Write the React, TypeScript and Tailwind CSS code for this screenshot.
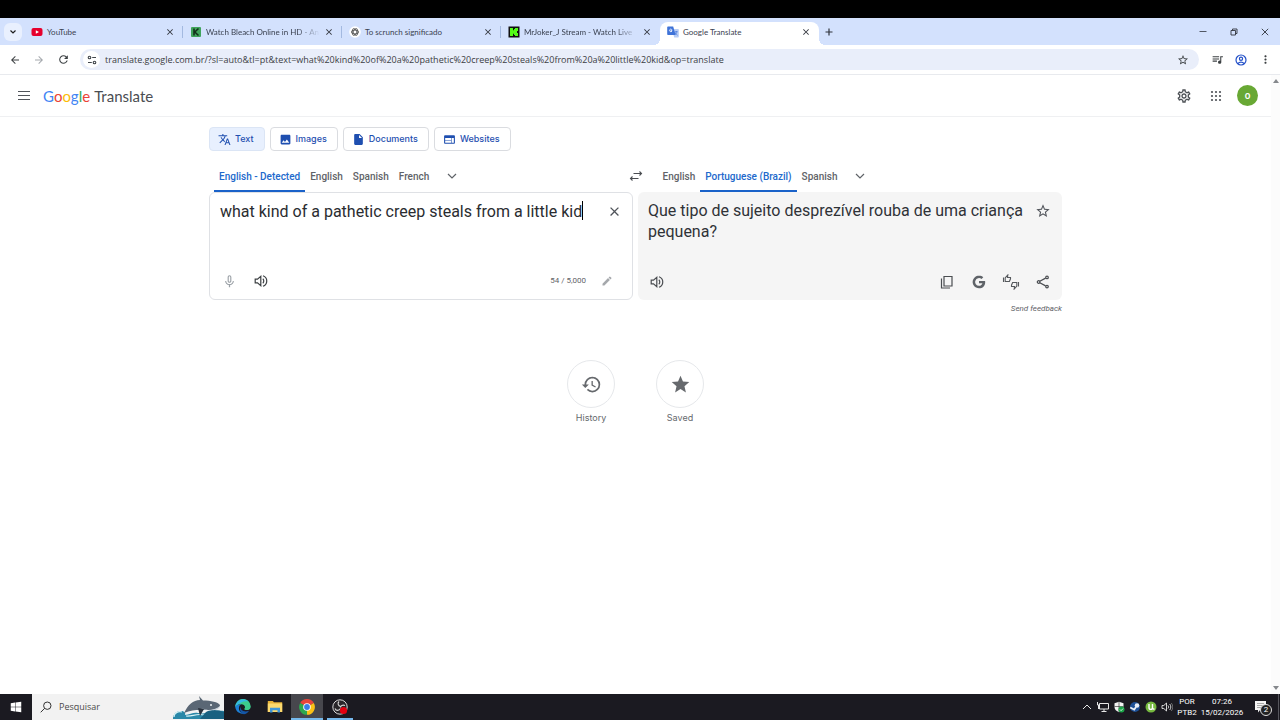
import type { ReactNode } from "react";
import { FaWindows } from "react-icons/fa";
import {
  MdArrowBack,
  MdArrowForward,
  MdClose,
  MdEdit,
  MdHistory,
  MdImage,
  MdInsertDriveFile,
  MdMicNone,
  MdMoreVert,
  MdOutlineSettings,
  MdQueueMusic,
  MdRefresh,
  MdStar,
  MdStarBorder,
  MdTranslate,
  MdWeb,
} from "react-icons/md";

const chromeFont = "font-['Open_Sans','Noto_Sans',sans-serif]";

const sourceText = "what kind of a pathetic creep steals from a little kid";
const url =
  "translate.google.com.br/?sl=auto&tl=pt&text=what%20kind%20of%20a%20pathetic%20creep%20steals%20from%20a%20little%20kid&op=translate";

const YouTubeIcon = () => (
  <svg viewBox="0 0 12 12" className="size-3">
    <rect x="0.5" y="2" width="11" height="8" rx="2" fill="#e6002d" />
    <path d="M4.8 4.2v3.6L8 6z" fill="#fff" />
  </svg>
);

const BleachIcon = () => (
  <svg viewBox="0 0 12 12" className="size-3">
    <rect x="1" y="1" width="10" height="10" rx="1" fill="#3fa35b" />
    <path d="M4 2.5v7M8.5 2.5L4.8 6l3.7 3.5" stroke="#12301c" strokeWidth="1.6" fill="none" />
  </svg>
);

const ChatIcon = () => (
  <svg viewBox="0 0 12 12" className="size-3">
    <circle cx="6" cy="6" r="5.8" fill="#fff" />
    <g fill="none" stroke="#444" strokeWidth="0.7">
      <ellipse cx="6" cy="6" rx="3.8" ry="1.9" />
      <ellipse cx="6" cy="6" rx="3.8" ry="1.9" transform="rotate(60 6 6)" />
      <ellipse cx="6" cy="6" rx="3.8" ry="1.9" transform="rotate(120 6 6)" />
    </g>
  </svg>
);

const KickIcon = () => (
  <svg viewBox="0 0 12 12" className="size-3">
    <rect x="0.5" y="0.5" width="11" height="11" fill="#111" />
    <path d="M2 2h3v2.3h1V3h1V2h3v3H9v2h1v3H7V9H6V7.7H5V10H2z" fill="#53fc18" />
  </svg>
);

const TranslateIcon = () => (
  <svg viewBox="0 0 12 12" className="size-3">
    <path d="M5 3h6a.8.8 0 0 1 .8.8v7a.8.8 0 0 1-.8.8H7.2z" fill="#b8cdf5" />
    <path d="M1 .5h5.2L8.6 9H1a.8.8 0 0 1-.8-.8V1.300A.8.8 0 0 1 1 .5z" fill="#3f73d8" />
    <path d="M5.400 4.200H4v1h.9A1.300 1.300 0 1 1 4.600 3.400" stroke="#fff" strokeWidth="0.8" fill="none" />
    <path d="M7.800 5.800h3M9.300 5v.8c-.1 1.400-.8 2.400-1.500 3M8.500 7c.5 1 1.200 1.600 2 2.200" stroke="#3f73d8" strokeWidth="0.7" fill="none" />
  </svg>
);

const GoogleGIcon = () => (
  <svg viewBox="0 0 24 24" className="size-4">
    <path
      d="M12 10.400v3.500h5.100c-.5 2.300-2.400 3.900-5.100 3.900a5.800 5.800 0 1 1 3.800-10.200l2.600-2.600A9.500 9.500 0 1 0 12 21.500c5.500 0 9.300-3.900 9.300-9.300 0-.6-.1-1.200-.2-1.800z"
      fill="#5f6368"
    />
  </svg>
);

const CopyIcon = () => (
  <svg viewBox="0 0 16 16" className="size-4" fill="none" stroke="#4a4d51" strokeWidth="1.200">
    <path d="M5 2.500h8v9.500H5z" />
    <path d="M2.500 4.500v9.500h8.500" />
  </svg>
);

const SpeakerIcon = () => (
  <svg viewBox="0 0 14 14" className="size-3.5" fill="none" stroke="currentColor" strokeWidth="1.200">
    <path d="M1.200 5.200h2.300L6.800 2.400v9.200L3.500 8.800H1.200z" />
    <path d="M8.800 4.800c1.300 1 1.300 3.400 0 4.400" />
    <path d="M9 1.800c5 1.700 5 8.700 0 10.400" />
  </svg>
);

const ShareIcon = () => (
  <svg viewBox="0 0 14 14" className="size-3.5" fill="none" stroke="currentColor" strokeWidth="1.200">
    <path d="M3.800 6.300l5.800-3.200M3.800 7.700l5.800 3.200" />
    <circle cx="2.600" cy="7" r="1.300" />
    <circle cx="11" cy="2.400" r="1.300" />
    <circle cx="11" cy="11.600" r="1.300" />
  </svg>
);

const RateIcon = () => (
  <svg viewBox="0 0 18 16" className="h-4 w-[18px]" fill="none" stroke="#55585c" strokeWidth="1.100">
    <path d="M1.500 3.500v4.500M3.200 3.800L5.800 1l-.3 2.500h3v1.300L7.400 7.500H3.200z" />
    <path d="M16.500 12.500V8M14.800 12.200L12.200 15l.3-2.500h-3v-1.300l1.100-2.700h4.200z" />
  </svg>
);

const SwapIcon = () => (
  <svg viewBox="0 0 14 12" className="h-3 w-3.5" fill="none" stroke="#4a4d51" strokeWidth="1.100">
    <path d="M4.500 3.500h8M10.500 1.500l2 2-2 2" />
    <path d="M9.500 8.500h-8M3.500 6.500l-2 2 2 2" />
  </svg>
);

const AppsIcon = () => (
  <svg viewBox="0 0 12 12" className="size-3" fill="#4d5156">
    {[2, 6, 10].map((y) => [2, 6, 10].map((x) => <circle key={`${x}-${y}`} cx={x} cy={y} r="1.100" />))}
  </svg>
);

const ChevronIcon = () => (
  <svg viewBox="0 0 10 10" className="size-2.5" fill="none" stroke="#5f6368" strokeWidth="1.200">
    <path d="M1 3l4 4 4-4" />
  </svg>
);

const TuneIcon = () => (
  <svg viewBox="0 0 12 12" className="size-3" fill="none" stroke="#41464b" strokeWidth="1.100">
    <path d="M6.200 3.500H10M2 8.500h3.800" />
    <circle cx="3.500" cy="3.500" r="1.300" />
    <circle cx="8.500" cy="8.500" r="1.300" />
  </svg>
);

const ProfileIcon = () => (
  <svg viewBox="0 0 14 14" className="size-3.5" fill="none" stroke="#2350c8" strokeWidth="1.200">
    <circle cx="7" cy="7" r="5" />
    <circle cx="7" cy="5.800" r="1.600" />
    <path d="M4 10.500c1.500-1.800 4.500-1.800 6 0" />
  </svg>
);

const WhaleIcon = () => (
  <svg viewBox="0 0 52 24" className="h-6 w-[52px]">
    <path d="M1 24c0-5 3-8 8-8 3 0 5 2 4 4 5 0 8-3 13-2 9 2 13-3 26-2v8z" fill="#2a88a8" />
    <path d="M2 22c0-4 4-6 8-5M14 21c6 1 10-3 18-1s12-2 19-2" stroke="#d5f1f5" strokeWidth="1.200" fill="none" />
    <path d="M34 17c6-3 12-2 18 0v7H28z" fill="#1a6180" />
    <path d="M12 18c4-8 9-13 16-13l-1-4 4 4.500c8 0 15 1.500 17 4.500 0 3-5 5-12 5-8 0-15-1-24 3z" fill="#5a6775" />
    <path d="M28 13c6 3 14 3 20-2-1 4-6 5-12 4z" fill="#c9d2da" />
    <path d="M26 13l2 8 4-7z" fill="#2b333e" />
    <circle cx="39" cy="10" r="1" fill="#eef2f4" />
  </svg>
);

const EdgeIcon = () => (
  <svg viewBox="0 0 16 16" className="size-4">
    <path d="M.2 8A7.800 7.800 0 0 1 15.800 7.400c0 2.400-1.900 3.700-4 3.700-1.800 0-2.500-.7-2.500-1.200S10 9.300 10 8.200C10 6.400 8.300 5.200 6.200 5.200 3.400 5.200 1 6.600.2 8z" fill="#3ccb8c" />
    <path d="M.2 8C.7 3 4.500.2 8 .2c2.500 0 4.500.9 5.800 2.400C10.500 1.400 4 3 .2 8z" fill="#35b8e6" />
    <path d="M.2 8c1-2 3.400-2.900 6-2.800-1.500.7-2.300 2.200-2.300 4 0 3.600 3.300 6 7.400 4.900A7.900 7.900 0 0 1 .2 8z" fill="#1c7fd6" />
    <path d="M5.800 7.600c-.8 3.400 2.800 6 8.300 4.200-1 1.500-2.300 2.600-4 3.300C6 15.800 3.700 11 5.800 7.600z" fill="#1456a8" />
  </svg>
);

const FolderIcon = () => (
  <svg viewBox="0 0 16 16" className="size-4">
    <path d="M.8 2h5l1.200 1.300h8.200V13H.8z" fill="#e8b339" />
    <path d="M.8 4.500h14.400V13H.8z" fill="#fbd96f" />
    <path d="M3 13.500V8.800h10v4.700h-2.500v-2.300h-5v2.300z" fill="#3f97d9" />
  </svg>
);

const ChromeIcon = () => (
  <svg viewBox="0 0 16 16" className="size-4">
    <path d="M8 8L1.200 4.100a7.800 7.800 0 0 1 13.600 0z" fill="#e8453c" />
    <path d="M8 8l6.800-3.900A7.800 7.800 0 0 1 8 15.800z" fill="#fbc116" />
    <path d="M8 8v7.800A7.800 7.800 0 0 1 1.200 4.100z" fill="#2da94f" />
    <circle cx="8" cy="8" r="3.800" fill="#fff" />
    <circle cx="8" cy="8" r="2.900" fill="#3a7ee8" />
  </svg>
);

const ObsIcon = () => (
  <svg viewBox="0 0 16 16" className="size-4">
    <circle cx="8" cy="8" r="7.200" fill="#28262a" stroke="#d8d8d8" strokeWidth="1" />
    <path d="M7 2.500c-2 2-.5 4.500 1.500 5M13 6.500c-2.500-1-4.500.2-4.500 2M3 9.500c1 2.500 4 2.500 5.500 0" stroke="#d8d8d8" strokeWidth="1.100" fill="none" />
    <circle cx="11.500" cy="11.500" r="3.600" fill="#e3000f" />
  </svg>
);

const tabs = [
  { title: "YouTube", icon: <YouTubeIcon /> },
  { title: "Watch Bleach Online in HD - An", icon: <BleachIcon />, fade: true },
  { title: "To scrunch significado", icon: <ChatIcon /> },
  { title: "MrJoker_J Stream - Watch Live", icon: <KickIcon />, fade: true },
  { title: "Google Translate", icon: <TranslateIcon />, active: true },
];

const modes = [
  { label: "Text", icon: <MdTranslate size={13} />, active: true },
  { label: "Images", icon: <MdImage size={13} /> },
  { label: "Documents", icon: <MdInsertDriveFile size={13} /> },
  { label: "Websites", icon: <MdWeb size={13} /> },
];

const IconButton = ({ label, children }: { label: string; children: ReactNode }) => (
  <button aria-label={label} className="flex size-8 shrink-0 items-center justify-center">
    {children}
  </button>
);

const TabStrip = () => (
  <div className="flex h-[27px] items-end bg-[#d3e1fd]">
    <div className="flex h-full w-6 shrink-0 items-center pl-1">
      <button aria-label="Search tabs" className="flex size-[18px] items-center justify-center rounded-md bg-[#e9f0fe]">
        <svg viewBox="0 0 8 8" className="size-2" fill="none" stroke="#1f1f1f" strokeWidth="1.200">
          <path d="M1.500 2.500L4 5l2.500-2.500" />
        </svg>
      </button>
    </div>
    {tabs.map((tab, i) => (
      <div
        key={tab.title}
        className={`relative flex h-[23px] w-[159px] items-center gap-1 pr-2 pb-1 pl-[7px] ${
          tab.active ? "rounded-t-lg bg-white" : ""
        }`}
      >
        {tab.icon}
        <span
          className={`min-w-0 flex-1 font-['Lato',sans-serif] text-[8px] leading-3 whitespace-nowrap text-[#3a4150] ${
            tab.fade ? "[mask-image:linear-gradient(to_right,#000_80%,transparent)]" : ""
          }`}
        >
          {tab.title}
        </span>
        <button aria-label={`Close ${tab.title}`} className="text-[#30343c]">
          <MdClose size={10} />
        </button>
        {i < 3 && <span className="absolute top-1 right-0 h-3 w-px bg-[#a3b9e0]" />}
        {tab.active && (
          <>
            <span className="absolute bottom-0 -left-1.5 size-1.5 bg-[radial-gradient(circle_at_0_0,transparent_6px,white_6px)]" />
            <span className="absolute -right-1.5 bottom-0 size-1.5 bg-[radial-gradient(circle_at_100%_0,transparent_6px,white_6px)]" />
          </>
        )}
      </div>
    ))}
    <button aria-label="New tab" className="flex h-full w-5 items-center justify-center">
      <svg viewBox="0 0 8 8" className="size-2" stroke="#30343c" strokeWidth="1.200">
        <path d="M4 .5v7M.5 4h7" />
      </svg>
    </button>
    <div className="ml-auto flex h-full items-center text-[#30343c]">
      <button aria-label="Minimize" className="flex w-[31px] justify-center">
        <svg viewBox="0 0 8 8" className="size-2" stroke="currentColor" strokeWidth="0.8">
          <path d="M.5 3.500h7" />
        </svg>
      </button>
      <button aria-label="Restore" className="flex w-[31px] justify-center">
        <svg viewBox="0 0 8 8" className="size-2" stroke="currentColor" strokeWidth="0.9" fill="none">
          <path d="M1 2.500h4.500V7H1zM2.500 2.500V1H7v4.500H5.500" />
        </svg>
      </button>
      <button aria-label="Close window" className="flex w-[31px] justify-center">
        <svg viewBox="0 0 8 8" className="size-2" stroke="currentColor" strokeWidth="0.9">
          <path d="M.8.8l6.400 6.400M7.200.8L.8 7.200" />
        </svg>
      </button>
    </div>
  </div>
);

const AddressBar = () => (
  <div className="flex h-[30px] items-center border-b border-[#e8eaee] bg-white px-[3px] text-[#3c4043]">
    <button aria-label="Back" className="flex w-6 justify-center">
      <MdArrowBack size={12} />
    </button>
    <button aria-label="Forward" className="flex w-6 justify-center text-[#a5a9ae]">
      <MdArrowForward size={12} />
    </button>
    <button aria-label="Reload" className="flex w-6 justify-center">
      <MdRefresh size={13} />
    </button>
    <div className="ml-[5px] flex h-[21px] flex-1 items-center gap-[5px] rounded-full bg-[#e9eefa] pr-2.5 pl-[3px]">
      <button aria-label="Site information" className="flex size-[17px] items-center justify-center rounded-full bg-white">
        <TuneIcon />
      </button>
      <input
        aria-label="Address"
        defaultValue={url}
        className="min-w-0 flex-1 bg-transparent text-[9px] leading-4 outline-none"
      />
      <button aria-label="Bookmark this page">
        <MdStarBorder size={12} />
      </button>
    </div>
    <div className="flex items-center pl-1.5">
      <button aria-label="Media controls" className="flex w-6 justify-center">
        <MdQueueMusic size={13} />
      </button>
      <button aria-label="Profile" className="flex w-6 justify-center">
        <ProfileIcon />
      </button>
      <button aria-label="Menu" className="flex w-6 justify-center">
        <MdMoreVert size={13} />
      </button>
    </div>
  </div>
);

const Header = () => (
  <header className="flex h-[42px] items-center border-b border-[#eff0f2] pr-[13px] pl-2">
    <IconButton label="Main menu">
      <svg viewBox="0 0 12 9" className="h-[9px] w-3" stroke="#50545a" strokeWidth="1">
        <path d="M0 .5h12M0 4.500h12M0 8.500h12" />
      </svg>
    </IconButton>
    <h1 className="ml-[3px] flex gap-1 font-['Lato',sans-serif] text-[15px] leading-5 text-[#4a4d52]">
      <span>
        <span className="text-[#4285f4]">G</span>
        <span className="text-[#ea4335]">o</span>
        <span className="text-[#fbbc05]">o</span>
        <span className="text-[#4285f4]">g</span>
        <span className="text-[#34a853]">l</span>
        <span className="text-[#ea4335]">e</span>
      </span>
      <span>Translate</span>
    </h1>
    <div className="ml-auto flex items-center text-[#4d5156]">
      <IconButton label="Settings">
        <MdOutlineSettings size={16} />
      </IconButton>
      <IconButton label="Google apps">
        <AppsIcon />
      </IconButton>
      <button
        aria-label="Google Account"
        className="ml-[5px] flex size-[21px] items-center justify-center rounded-full bg-[#68a834] text-[10px] leading-none font-medium text-white"
      >
        o
      </button>
    </div>
  </header>
);

const LanguageTab = ({ children, active }: { children: ReactNode; active?: boolean }) => (
  <button
    className={`h-8 border-b-2 px-[5px] pt-[3px] text-[10px] leading-4 font-medium ${
      active ? "border-[#1a62c9] text-[#2269cc]" : "border-transparent text-[#5f6368]"
    }`}
  >
    {children}
  </button>
);

const Languages = () => (
  <div className="grid grid-cols-[1fr_24px_1fr]">
    <div className="flex items-center pl-[5px]">
      <LanguageTab active>English - Detected</LanguageTab>
      <LanguageTab>English</LanguageTab>
      <LanguageTab>Spanish</LanguageTab>
      <LanguageTab>French</LanguageTab>
      <div className="pl-0.5">
        <IconButton label="More source languages">
          <ChevronIcon />
        </IconButton>
      </div>
    </div>
    <button aria-label="Swap languages" className="flex items-center justify-center">
      <SwapIcon />
    </button>
    <div className="flex items-center pl-2.5">
      <LanguageTab>English</LanguageTab>
      <LanguageTab active>Portuguese (Brazil)</LanguageTab>
      <LanguageTab>Spanish</LanguageTab>
      <div className="pl-0.5">
        <IconButton label="More target languages">
          <ChevronIcon />
        </IconButton>
      </div>
    </div>
  </div>
);

const SourcePanel = () => (
  <section className="relative flex h-[108px] flex-col justify-between rounded-md border border-[#dfe1e5] bg-white">
    <div className="flex items-start">
      <textarea
        aria-label="Source text"
        defaultValue={sourceText}
        rows={2}
        className="flex-1 resize-none overflow-hidden pt-2 pl-2.5 text-[16px] leading-[21px] text-[#2a2c30] outline-none"
      />
      <span className="absolute top-2 left-[372px] h-[19px] w-px bg-black" />
      <button aria-label="Clear source text" className="flex size-9 items-center justify-center text-[#50545a]">
        <MdClose size={15} />
      </button>
    </div>
    <div className="flex items-center px-[3px] pb-0.5 text-[#3c4043]">
      <IconButton label="Translate by voice">
        <MdMicNone size={15} className="text-[#9aa0a6]" />
      </IconButton>
      <IconButton label="Listen to source text">
        <SpeakerIcon />
      </IconButton>
      <span className="ml-auto pr-[5px] text-[8px] leading-4 text-[#5f6368]">54 / 5,000</span>
      <IconButton label="Handwriting">
        <MdEdit size={12} className="text-[#a5a8ac]" />
      </IconButton>
      <span className="w-1.5" />
    </div>
  </section>
);

const TargetPanel = () => (
  <section className="flex h-[108px] flex-col justify-between rounded-md bg-[#f5f5f5]">
    <div className="flex items-start">
      <p className="flex-1 pt-2 pl-2.5 text-[16px] leading-[21px] text-[#2f3237]">
        Que tipo de sujeito desprezível rouba de uma criança pequena?
      </p>
      <button aria-label="Save translation" className="flex size-[38px] items-center justify-center text-[#50545a]">
        <MdStarBorder size={16} />
      </button>
    </div>
    <div className="flex items-center px-[3px] pb-0.5 text-[#4a4d51]">
      <IconButton label="Listen to translation">
        <SpeakerIcon />
      </IconButton>
      <span className="flex-1" />
      <IconButton label="Copy translation">
        <CopyIcon />
      </IconButton>
      <IconButton label="Search on Google">
        <GoogleGIcon />
      </IconButton>
      <IconButton label="Rate translation">
        <RateIcon />
      </IconButton>
      <IconButton label="Share translation">
        <ShareIcon />
      </IconButton>
    </div>
  </section>
);

const RoundAction = ({ label, children }: { label: string; children: ReactNode }) => (
  <button className="flex w-12 flex-col items-center gap-0.5 text-[#66696d]">
    <span className="flex size-12 items-center justify-center rounded-full border border-[#e6e8eb]">{children}</span>
    <span className="font-['Inter',sans-serif] text-[9px] leading-4">{label}</span>
  </button>
);

const Translator = () => (
  <main className="mx-auto w-full max-w-[853px] pt-2.5">
    <nav className="flex gap-[5px] pb-[9px]">
      {modes.map((mode) => (
        <button
          key={mode.label}
          className={`flex h-6 items-center gap-1 rounded-sm border pr-2.5 pl-2 font-['Inter',sans-serif] text-[9px] leading-4 font-medium text-[#1f4fb0] ${
            mode.active ? "border-[#dbe5f5] bg-[#e8f0fe]" : "border-[#dadce0]"
          }`}
        >
          {mode.icon}
          {mode.label}
        </button>
      ))}
    </nav>
    <Languages />
    <div className="grid grid-cols-2 gap-[5px]">
      <SourcePanel />
      <TargetPanel />
    </div>
    <div className="flex justify-end">
      <button className="text-[8px] leading-[18px] text-[#5f6368] italic">Send feedback</button>
    </div>
    <div className="flex justify-center gap-[41px] pt-[42px]">
      <RoundAction label="History">
        <MdHistory size={21} />
      </RoundAction>
      <RoundAction label="Saved">
        <MdStar size={21} />
      </RoundAction>
    </div>
  </main>
);

const ScrollBar = () => (
  <div className="flex w-[9px] shrink-0 flex-col items-center justify-between bg-[#fcfcfc] py-1">
    <svg viewBox="0 0 6 4" className="h-1 w-1.5">
      <path d="M0 4l3-4 3 4z" fill="#85888c" />
    </svg>
    <svg viewBox="0 0 6 4" className="h-1 w-1.5">
      <path d="M0 0l3 4 3-4z" fill="#85888c" />
    </svg>
  </div>
);

const Tray = () => (
  <div className="ml-auto flex items-center font-['Roboto',sans-serif]">
    <div className="flex items-center gap-1">
      <svg viewBox="0 0 12 12" className="size-3" fill="none" stroke="#e8e8e8" strokeWidth="1">
        <path d="M2 8l4-4 4 4" />
      </svg>
      <svg viewBox="0 0 12 12" className="size-3" fill="none" stroke="#e8e8e8" strokeWidth="1">
        <path d="M2.500 2.500h9V8h-9zM7 8v2M4.500 10.500h5M.5 1v3h2M1.500 4v4" />
      </svg>
      <svg viewBox="0 0 12 12" className="size-3">
        <path d="M6 .8l4.500 1.500V6c0 2.500-2 4.300-4.500 5.200C3.500 10.300 1.500 8.500 1.500 6V2.300z" fill="#f2f2f2" />
        <path d="M6 .8V11M1.500 5.500h9" stroke="#222" strokeWidth="0.6" />
        <circle cx="8.500" cy="8.500" r="3" fill="#1ba548" />
        <path d="M7 8.500l1.100 1.100 1.900-2" stroke="#fff" strokeWidth="0.8" fill="none" />
      </svg>
      <svg viewBox="0 0 12 12" className="size-3">
        <circle cx="6" cy="6" r="5" fill="#1d4f95" />
        <circle cx="8" cy="4.500" r="2.300" fill="#e8eef6" />
        <path d="M1.200 6.500l4 2L7 6" stroke="#e8eef6" strokeWidth="1.800" fill="none" />
      </svg>
      <svg viewBox="0 0 12 12" className="size-3">
        <circle cx="6" cy="6" r="5.500" fill="#76b83f" />
        <path d="M4 3v3.500c0 2.500 3.500 2.500 3.500 0V3M7.500 6.500c0 1.500 1 1.800 2 1.500" stroke="#fff" strokeWidth="1.400" fill="none" />
      </svg>
      <svg viewBox="0 0 12 12" className="size-3" fill="none" stroke="#e8e8e8" strokeWidth="0.9">
        <path d="M1 4.500h1.800L5.500 2v8L2.800 7.500H1zM7 4.500c.8 1 .8 2 0 3M8.700 3c1.500 2 1.500 4 0 6" />
        <path d="M10.300 2c2 2.500 2 5.500 0 8" stroke="#777" />
      </svg>
    </div>
    <div className="flex w-7 flex-col items-center text-[8px] leading-[11px]">
      <span>POR</span>
      <span>PTB2</span>
    </div>
    <div className="flex w-[42px] flex-col items-center text-[8px] leading-[11px]">
      <span>07:26</span>
      <span>15/02/2026</span>
    </div>
    <button aria-label="Notifications, 2 new" className="relative flex w-[35px] justify-center">
      <svg viewBox="0 0 14 14" className="size-3.5">
        <path d="M1 1h11v9H6l-2 2.500V10H1z" fill="#f5f5f5" />
        <path d="M3 3.500h7M3 5.500h7M3 7.500h4" stroke="#777" strokeWidth="0.6" />
      </svg>
      <span className="absolute top-1 left-[17px] flex size-3 items-center justify-center rounded-full border border-[#ddd] bg-[#222] text-[8px] leading-none">
        2
      </span>
    </button>
    <span className="h-[26px] w-px bg-[#55555c]" />
    <span className="w-px" />
  </div>
);

const TaskBar = () => (
  <footer className={`flex h-[26px] items-center bg-[#1b1a21] text-white ${chromeFont}`}>
    <button aria-label="Start" className="flex w-8 justify-center">
      <FaWindows size={12} />
    </button>
    <label className="flex h-full w-48 items-center bg-[#f2f2f2] pl-2 text-[#4a4a4a]">
      <svg viewBox="0 0 12 12" className="size-3 shrink-0" fill="none" stroke="#333" strokeWidth="1">
        <circle cx="7.300" cy="4.700" r="3.700" />
        <path d="M4.700 7.300L.7 11.300" />
      </svg>
      <input
        aria-label="Pesquisar"
        placeholder="Pesquisar"
        className="min-w-0 flex-1 bg-transparent pl-[7px] text-[9px] leading-4 outline-none placeholder:text-[#4a4a4a]"
      />
      <WhaleIcon />
    </label>
    <button aria-label="Edge" className="ml-[3px] flex w-8 justify-center">
      <EdgeIcon />
    </button>
    <button aria-label="File Explorer" className="flex w-8 justify-center">
      <FolderIcon />
    </button>
    <button
      aria-label="Chrome"
      className="flex h-full w-8 items-center justify-center border-t-2 border-b-2 border-t-[#47474d] border-b-[#76b9ed] bg-[#47474d]"
    >
      <ChromeIcon />
    </button>
    <button
      aria-label="OBS Studio"
      className="ml-1 flex h-full w-[26px] items-center justify-center border-t-2 border-b-2 border-t-transparent border-b-[#76b9ed]"
    >
      <ObsIcon />
    </button>
    <Tray />
  </footer>
);

const App = () => {
  return (
    <div className="flex min-h-screen flex-col bg-white font-['Roboto',sans-serif]">
      <div className="h-[18px] bg-black" />
      <div className={chromeFont}>
        <TabStrip />
        <AddressBar />
      </div>
      <div className="flex flex-1">
        <div className="min-w-0 flex-1">
          <Header />
          <Translator />
        </div>
        <ScrollBar />
      </div>
      <TaskBar />
    </div>
  );
};

export default App;
